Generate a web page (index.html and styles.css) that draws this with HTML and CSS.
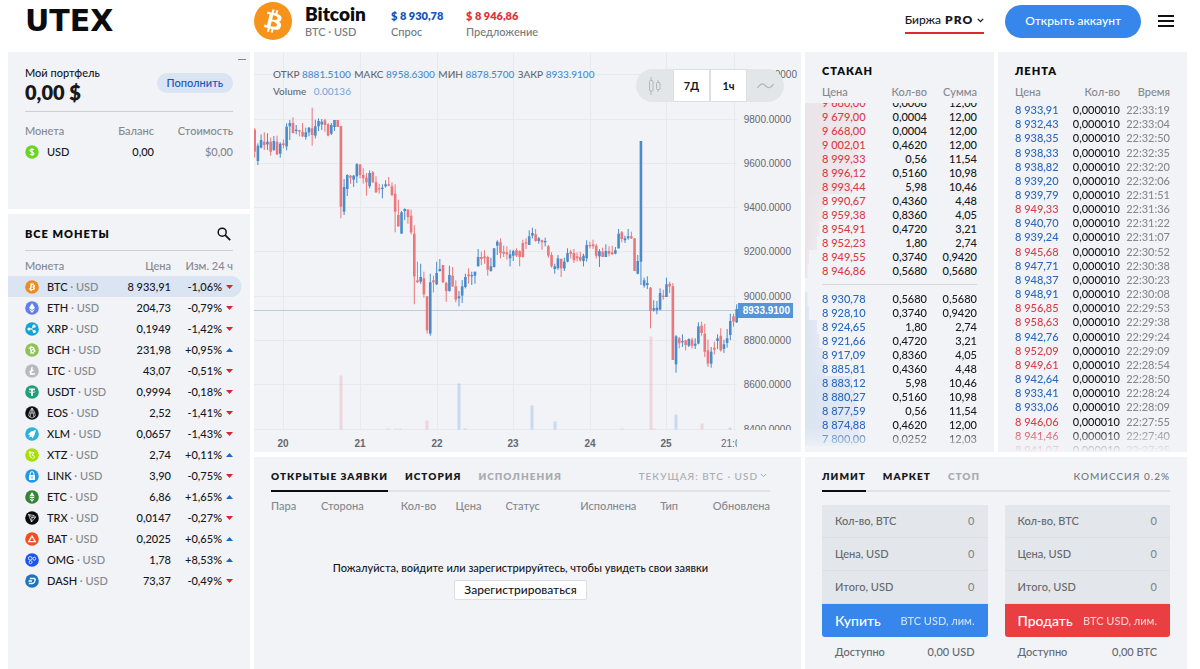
FILE: index.html
```html
<!DOCTYPE html>
<html lang="ru">
<head>
<meta charset="utf-8">
<title>UTEX</title>
<meta name="viewport" content="width=device-width, initial-scale=1">
<link rel="stylesheet" href="styles.css">
</head>
<body>
<header class="top">
  <a class="logo" href="#">UTEX</a>
  <div class="ticker">
    <svg class="ticker-icon" viewBox="0 0 32 32" aria-hidden="true"><circle cx="16" cy="16" r="16" fill="#f7931a"/><path class="btc-mark" fill="#fff" d="M23.189 14.02c.314-2.096-1.283-3.223-3.465-3.975l.708-2.84-1.728-.43-.69 2.765c-.454-.114-.92-.22-1.385-.326l.695-2.783L15.596 6l-.708 2.839c-.376-.086-.746-.17-1.104-.26l.002-.009-2.384-.595-.46 1.846s1.283.294 1.256.312c.7.175.826.638.805 1.006l-.806 3.235c.048.012.11.03.18.057l-.183-.045-1.13 4.532c-.086.212-.303.531-.793.41.018.025-1.256-.313-1.256-.313l-.858 1.978 2.25.561c.418.105.828.215 1.231.318l-.715 2.872 1.727.43.708-2.84c.472.127.93.245 1.378.357l-.706 2.828 1.728.43.715-2.866c2.948.558 5.164.333 6.097-2.333.752-2.146-.037-3.385-1.588-4.192 1.13-.26 1.98-1.003 2.207-2.538zm-3.95 5.538c-.533 2.147-4.148.986-5.32.695l.95-3.805c1.172.293 4.929.872 4.37 3.11zm.535-5.569c-.487 1.953-3.495.96-4.47.717l.86-3.45c.975.243 4.118.696 3.61 2.733z"/></svg>
    <div class="ticker-name"><h1>Bitcoin</h1><p>BTC · USD</p></div>
    <div class="quote"><strong class="bid">$ 8 930,78</strong><p>Спрос</p></div>
    <div class="quote"><strong class="ask">$ 8 946,86</strong><p>Предложение</p></div>
  </div>
  <nav class="actions">
    <button class="mode" type="button">Биржа <b>PRO</b><svg width="7" height="5" viewBox="0 0 7 5" aria-hidden="true"><path d="M.8.9 3.5 3.6 6.2.9" fill="none" stroke="#111" stroke-width="1.2"/></svg></button>
    <button class="signup" type="button">Открыть аккаунт</button>
    <button class="menu" type="button" aria-label="Меню"><svg width="16" height="12" viewBox="0 0 16 12"><path d="M0 1h16M0 6h16M0 11h16" stroke="#111" stroke-width="2"/></svg></button>
  </nav>
</header>

<main class="board">
  <div class="col">
    <section class="panel wallet">
      <button class="collapse" type="button" aria-label="Свернуть"></button>
      <div class="wallet-head">
        <div><h2>Мой портфель</h2><p class="total">0,00 $</p></div>
        <button class="deposit" type="button">Пополнить</button>
      </div>
      <table class="list wallet-list">
        <thead><tr><th>Монета</th><th>Баланс</th><th>Стоимость</th></tr></thead>
        <tbody><tr><td><span class="coin"><svg width="14" height="14" viewBox="0 0 14 14" aria-hidden="true"><circle cx="7" cy="7" r="6.7" fill="#6bd425"/><path d="M9 4.9C8.5 4.2 5 3.9 5 5.5S9 7 9 8.600 5.300 9.900 4.900 8.900M7 3v8" fill="none" stroke="#fff" stroke-width="1.1"/></svg>USD</span></td><td>0,00</td><td class="muted">$0,00</td></tr></tbody>
      </table>
    </section>
    <section class="panel coins">
      <div class="coins-head"><h2 class="caps">ВСЕ МОНЕТЫ</h2>
        <button class="search" type="button" aria-label="Поиск"><svg width="14" height="14" viewBox="0 0 14 14"><circle cx="5.200" cy="5.200" r="4" fill="none" stroke="#111" stroke-width="1.500"/><path d="m8.200 8.200 5 5" stroke="#111" stroke-width="1.800"/></svg></button>
      </div>
      <table class="list coins-list">
        <thead><tr><th>Монета</th><th>Цена</th><th>Изм. 24 ч</th></tr></thead>
        <tbody id="coins"></tbody>
      </table>
    </section>
  </div>

  <div class="col">
    <section class="panel chart">
      <svg id="chart" viewBox="0 0 547 400" preserveAspectRatio="xMinYMin slice" role="img" aria-label="BTC USD"></svg>
      <div class="legend">
        <p>ОТКР <b>8881.5100</b> МАКС <b>8958.6300</b> МИН <b>8878.5700</b> ЗАКР <b>8933.9100</b></p>
        <p>Volume <span>0.00136</span></p>
      </div>
      <div class="range">
        <button type="button" aria-label="Свечи"><svg width="13" height="18" viewBox="0 0 13 18"><path d="M3 0v3.500M3 14v4M10 3v2.500M10 12v3" stroke="#b2b5b8"/><rect x="1.500" y="3.500" width="3.500" height="10.500" rx="1" fill="none" stroke="#b2b5b8"/><rect x="8.500" y="5.500" width="3.500" height="7" rx="1" fill="none" stroke="#b2b5b8"/></svg></button>
        <button class="on" type="button">7Д</button>
        <button class="on" type="button">1ч</button>
        <button type="button" aria-label="Линия"><svg width="17" height="8" viewBox="0 0 17 8"><path d="M.5 6C3 2 5.500.5 8.200 3.500S13.500 7 16.500 1.800" fill="none" stroke="#b2b5b8" stroke-width="1.200"/></svg></button>
      </div>
    </section>
    <section class="panel orders">
      <div class="tabs">
        <button class="tab current" type="button">ОТКРЫТЫЕ ЗАЯВКИ</button><button class="tab" type="button">ИСТОРИЯ</button><button class="tab off" type="button">ИСПОЛНЕНИЯ</button>
        <button class="filter" type="button">ТЕКУЩАЯ: BTC · USD <svg width="7" height="5" viewBox="0 0 7 5" aria-hidden="true"><path d="M.8.9 3.500 3.600 6.200.9" fill="none" stroke="#a9acaf"/></svg></button>
      </div>
      <table class="orders-list"><thead><tr><th>Пара</th><th>Сторона</th><th>Кол-во</th><th>Цена</th><th>Статус</th><th>Исполнена</th><th>Тип</th><th>Обновлена</th></tr></thead></table>
      <div class="empty"><p>Пожалуйста, войдите или зарегистрируйтесь, чтобы увидеть свои заявки</p><button type="button">Зарегистрироваться</button></div>
    </section>
  </div>

  <div class="col">
    <div class="pair">
      <section class="panel feed">
        <h2 class="caps">СТАКАН</h2>
        <table class="ticks heads"><thead><tr><th>Цена</th><th>Кол-во</th><th>Сумма</th></tr></thead></table>
        <div class="asks"><table class="ticks"><tbody id="asks"></tbody></table></div>
        <div class="bids"><table class="ticks"><tbody id="bids"></tbody></table></div>
      </section>
      <section class="panel feed">
        <h2 class="caps">ЛЕНТА</h2>
        <table class="ticks heads"><thead><tr><th>Цена</th><th>Кол-во</th><th>Время</th></tr></thead></table>
        <div class="tape"><table class="ticks"><tbody id="tape"></tbody></table></div>
      </section>
    </div>
    <section class="panel trade">
      <div class="tabs">
        <button class="tab current" type="button">ЛИМИТ</button><button class="tab" type="button">МАРКЕТ</button><button class="tab off" type="button">СТОП</button>
        <span class="fee">КОМИССИЯ 0.2%</span>
      </div>
      <div class="forms">
        <form>
          <label class="field">Кол-во, BTC<input type="text" value="0"></label>
          <label class="field">Цена, USD<input type="text" value="0"></label>
          <label class="field">Итого, USD<input type="text" value="0"></label>
          <button class="submit buy" type="button">Купить <small>BTC USD, лим.</small></button>
          <p class="available"><span>Доступно</span><span>0,00 USD</span></p>
        </form>
        <form>
          <label class="field">Кол-во, BTC<input type="text" value="0"></label>
          <label class="field">Цена, USD<input type="text" value="0"></label>
          <label class="field">Итого, USD<input type="text" value="0"></label>
          <button class="submit sell" type="button">Продать <small>BTC USD, лим.</small></button>
          <p class="available"><span>Доступно</span><span>0,00 BTC</span></p>
        </form>
      </div>
    </section>
  </div>
</main>
<script src="app.js"></script>
</body>
</html>
```
FILE: styles.css
```css
* { box-sizing: border-box; }
body, h1, h2, p { margin: 0; }
body {
  min-height: 100vh;
  display: flex;
  flex-direction: column;
  font: 11px/14px Lato, "Noto Sans", sans-serif;
  font-weight: 500;
  color: #16181c;
  background: #fff;
}
button, input { font: inherit; color: inherit; border: 0; padding: 0; background: none; }
button { cursor: pointer; }
svg { display: block; flex: none; }
table { border-collapse: collapse; width: 100%; }
th, td { padding: 0; font-weight: inherit; text-align: right; vertical-align: middle; white-space: nowrap; }
th:first-child, td:first-child { text-align: left; }
th, .muted { color: #85888d; }

.top { display: flex; align-items: center; height: 52px; padding: 0 26px 10px 25px; }
.logo { width: 229px; font: bold 30px/30px "DejaVu Sans", sans-serif; color: #0b0c0e; text-decoration: none; }
.ticker { display: flex; align-items: center; flex: 1; }
.ticker-icon { width: 38px; height: 38px; margin-right: 13px; }
.ticker-name { width: 86px; }
.ticker h1 { font-size: 19px; line-height: 22px; font-weight: 800; color: #0b0c0e; }
.ticker p { line-height: 14px; color: #76797e; }
.quote { width: 75px; padding-top: 4px; white-space: nowrap; }
.quote strong { display: block; line-height: 18px; font-weight: 800; }
.bid { color: #1455b8; }
.ask { color: #dc3340; }
.actions { display: flex; align-items: center; }
.mode { display: flex; align-items: center; gap: 4px; height: 25px; margin-right: 21px; font-size: 12px; border-bottom: 2px solid #df2730; }
.mode b { font-weight: 800; letter-spacing: 1px; }
.signup { height: 33px; padding: 0 20px; border-radius: 17px; background: #3686eb; color: #fff; font-size: 12px; }
.menu { margin-left: 17px; }

.board { flex: 1; display: grid; grid-template-columns: 242px minmax(0, 1fr) 382px; gap: 4px; padding: 0 13px 0 8px; }
.col { display: flex; flex-direction: column; gap: 5px; min-width: 0; }
.panel { position: relative; background: #f1f3f7; }
.caps { font-size: 11px; line-height: 14px; font-weight: 800; letter-spacing: 1px; color: #0b0c0e; }

.wallet { min-height: 157px; padding: 13px 17px; }
.collapse { position: absolute; top: 7px; right: 4px; width: 8px; height: 1px; background: #85888d; }
.wallet-head, .coins-head { display: flex; align-items: center; justify-content: space-between; border-bottom: 1px solid #cdd1d7; }
.wallet-head { height: 47px; padding-bottom: 7px; }
.wallet-head h2 { font-size: 11px; font-weight: 500; }
.total { font-size: 20px; line-height: 24px; font-weight: 800; }
.deposit { height: 20px; padding: 0 10px; margin-bottom: 4px; border-radius: 10px; background: #dae4f3; color: #1455b8; }
.list th, .list td { height: 21px; }
.list th:first-child { padding-left: 17px; }
.wallet-list { margin-top: 8px; }
.wallet-list th:first-child { padding-left: 0; }
.wallet-list th:last-child { width: 79px; }
.coin { display: flex; align-items: center; gap: 8px; }
.coin i { font-style: normal; color: #85888d; }
.coins { flex: 1; }
.coins-head { margin: 0 17px; height: 37px; padding: 4px 2px 0 0; }
.coins-list { margin-top: 4px; }
.coins-list td:first-child { padding-left: 17px; }
.coins-list th:last-child { padding-right: 17px; width: 79px; }
.coins-list td:last-child { padding-right: 17px; }
.change { display: flex; align-items: center; justify-content: flex-end; gap: 4px; }
.coins-list tr.picked { background: linear-gradient(#dbe4f2, #dbe4f2) 0 0 / calc(100% - 18px) 100% no-repeat; }
.coins-list tr.picked td:last-child { background: radial-gradient(circle at 0 50%, #dbe4f2 10px, transparent 11px) 100% 0 / 19px 100% no-repeat; }

.chart { height: 400px; overflow: hidden; }
.chart > svg { width: 100%; height: 100%; }
.axis { font: 10px "Liberation Sans", Arial, sans-serif; fill: #65686d; }
.axis-strong { font-weight: bold; }
.axis-now { font-weight: bold; fill: #fff; }
.legend { position: absolute; top: 14px; left: 19px; line-height: 17px; font-size: 10px; color: #65686d; }
.legend b { font-weight: 500; color: #4a8dcf; margin-right: 1px; }
.legend span { color: #7aa9dc; margin-left: 5px; }
.range { position: absolute; top: 17px; right: 17px; display: grid; grid-template-columns: repeat(4, 37px); height: 33px; border-radius: 17px; overflow: hidden; background: #e3e6e9; }
.range button { display: grid; place-items: center; }
.range .on { background: #fff; border: 1px solid #dcdee1; font-weight: 700; }

.tabs { display: flex; gap: 17px; height: 35px; border-bottom: 2px solid #dfe2e6; font-size: 10px; letter-spacing: 1px; }
.tab { height: 35px; padding-top: 4px; font-weight: 800; letter-spacing: 1px; border-bottom: 2px solid transparent; white-space: nowrap; }
.tab.current { border-color: #0b0c0e; }
.tab.off { color: #a9acaf; }
.filter { display: flex; align-items: center; gap: 2px; margin-left: auto; padding: 4px 3px 0 0; letter-spacing: 1px; color: #a9acaf; }
.fee { margin-left: auto; padding-top: 12px; color: #76797e; }

.orders { flex: 1; padding: 0 31px 0 17px; }
.orders-list { table-layout: fixed; margin-top: 7px; }
.orders-list th { text-align: left; height: 14px; width: 10%; }
.orders-list th:nth-child(2) { width: 16%; }
.orders-list th:nth-child(3) { width: 11%; }
.orders-list th:nth-child(5) { width: 15%; }
.orders-list th:nth-child(6) { width: 16%; }
.orders-list th:nth-child(7) { width: 8%; }
.orders-list th:last-child { width: 14%; text-align: right; }
.empty { margin-top: 48px; text-align: center; }
.empty button { height: 20px; margin-top: 5px; padding: 0 9px; background: #fff; border: 1px solid #dcdee1; border-radius: 2px; font-size: 12px; line-height: 16px; }

.pair { display: grid; grid-template-columns: 1fr 1fr; gap: 4px; height: 400px; }
.feed { display: flex; flex-direction: column; overflow: hidden; padding-top: 12px; }
.feed .caps { padding: 0 17px; }
.ticks { flex: none; }
.ticks th, .ticks td { height: 14px; line-height: 14px; }
.ticks th:first-child, .ticks td:first-child { padding-left: 17px; }
.ticks th:last-child, .ticks td:last-child { padding-right: 17px; width: 67px; }
.heads { margin-top: 7px; }
.asks { display: flex; flex-direction: column; justify-content: flex-end; overflow: hidden; height: 175px; margin-top: 4px; }
.bids { flex: 1; overflow: hidden; padding-top: 8px; margin-top: 6px; position: relative; }
.bids::before { content: ""; position: absolute; top: 0; left: 17px; right: 17px; height: 1px; background: #d5d9de; }
.bids, .tape { -webkit-mask-image: linear-gradient(#000 calc(100% - 24px), transparent); mask-image: linear-gradient(#000 calc(100% - 24px), transparent); }
.tape { flex: 1; overflow: hidden; margin-top: 4px; }
.tape .ticks { height: 354px; }
#asks tr { background: linear-gradient(90deg, #eae3e8, #efe9ed) 0 0 / var(--depth) 100% no-repeat; }
#bids tr { background: linear-gradient(90deg, #dbe4f2, #e3e9f4) 0 0 / var(--depth) 100% no-repeat; }
.up { color: #2a67bd; }
.down { color: #d93c49; }

.trade { flex: 1; padding: 0 17px; }
.forms { display: grid; grid-template-columns: 1fr 1fr; gap: 17px; margin-top: 13px; }
.field { display: flex; align-items: center; height: 33px; padding: 0 13px; background: #e3e7eb; border-bottom: 1px solid #dce0e5; font-size: 11px; color: #65686d; white-space: nowrap; }
.field input { flex: 1; min-width: 0; width: 20px; text-align: right; color: #85888d; outline: 0; }
.submit { display: flex; align-items: center; justify-content: space-between; width: 100%; height: 33px; padding: 0 13px; border-radius: 0 0 3px 3px; color: #fff; font-size: 14px; }
.submit small { font-size: 11px; opacity: .75; }
.buy { background: #3686eb; }
.sell { background: #e93e42; }
.available { display: flex; justify-content: space-between; padding: 8px 13px; color: #65686d; }
```
FILE: app.js
```js
const stroke = (d, w = 1) => `<path d="${d}" fill="none" stroke="#fff" stroke-width="${w}"/>`;
const solid = (d) => `<path d="${d}" fill="#fff"/>`;
const btc = document.querySelector('.btc-mark').getAttribute('d');

const coins = [
  ['BTC', '8 933,91', '-1,06%', '#f08a1e', `<path d="${btc}" fill="#fff" transform="scale(.4375)"/>`],
  ['ETH', '204,73', '-0,79%', '#627eea', solid('M7 2 10 7 7 9 4 7zM7 12 4 8l3 1.700L10 8z')],
  ['XRP', '0,1949', '-1,42%', '#13a3d8', stroke('M3.500 7h3l2-2.500M6.500 7l2.500 2.500') + '<circle cx="4" cy="7" r="1.600" fill="#fff"/><circle cx="9" cy="4.200" r="1.600" fill="#fff"/><circle cx="9.300" cy="9.600" r="1.600" fill="#fff"/>'],
  ['BCH', '231,98', '+0,95%', '#8dc351', `<path d="${btc}" fill="#fff" transform="rotate(-28 7 7) scale(.4375)"/>`],
  ['LTC', '43,07', '-0,51%', '#b9b9bb', stroke('M7.200 3 5.500 10H10M4.500 8 8.500 6', 1.400)],
  ['USDT', '0,9994', '-0,18%', '#1f9e78', stroke('M4 4.300h6M7 4v7', 1.700) + stroke('M3.500 6.700c1 1 6 1 7 0', 0.700)],
  ['EOS', '2,52', '-1,41%', '#111214', stroke('M7 2 4.500 6 3.700 10 7 12l3.300-2L9.500 6zM7 2 5 11.500M7 2l2 9.500M4.500 7h5', 0.600)],
  ['XLM', '0,0657', '-1,43%', '#28b4dc', solid('M11 3 6 4.500 3 7.500l2 .5-1 2.500L6.500 9.500l1 2L9.500 8z')],
  ['XTZ', '2,74', '+0,11%', '#a6df00', stroke('M5 3v5c0 1.500 1.500 1.500 2 1M3.700 4.800H9L7 7c3 0 3 3.500.5 3.500', 1)],
  ['LINK', '3,90', '-0,75%', '#1e9be8', solid('M4 6h6v5H4z') + stroke('M5.200 6V4.500a1.800 1.800 0 0 1 3.600 0V6', 1) + '<path d="M6.500 7.500h1v2h-1z" fill="#1e9be8"/>'],
  ['ETC', '6,86', '+1,65%', '#328332', solid('M7 2 9.800 6.500 7 5.700 4.200 6.500zM4.200 7.300 7 6.500l2.800.8L7 8.800zM7 12 4.400 8.400 7 9.800l2.600-1.400z')],
  ['TRX', '0,0147', '-0,27%', '#0b0b0d', stroke('M3.500 3.500 9 4.500l1.700 1.700L6.500 11zM3.500 3.500l3.500 3L10.700 6.200M9 4.500 7 6.500 6.500 11', 0.700)],
  ['BAT', '0,2025', '+0,65%', '#f0501e', '<path d="M7 4 10.300 9.600H3.700z" fill="none" stroke="#fff" stroke-width="1.300"/>'],
  ['OMG', '1,78', '+8,53%', '#1a53f0', '<g fill="none" stroke="#fff" stroke-width=".8"><circle cx="5.200" cy="5.300" r="1.800"/><circle cx="9.300" cy="5.700" r="1.500"/><circle cx="5.600" cy="9.200" r="1.500"/></g>'],
  ['DASH', '73,37', '-0,49%', '#1c75bc', stroke('M4.800 4.500H9c1.500 0 1.200 1.500.9 2.700-.4 1.500-1 2.300-2.300 2.300H3.800M3.500 7H7', 1.300)],
];

document.getElementById('coins').innerHTML = coins.map(([name, price, change, color, mark], i) => {
  const up = change[0] === '+';
  const arrow = up ? '<path d="M0 5 3.500 1 7 5z" fill="#1c66c4"/>' : '<path d="M0 1h7L3.500 5z" fill="#d9232e"/>';
  return `<tr${i ? '' : ' class="picked"'}><td><span class="coin"><svg width="14" height="14" viewBox="0 0 14 14" aria-hidden="true"><circle cx="7" cy="7" r="6.800" fill="${color}"/>${mark}</svg><span>${name} <i>· USD</i></span></span></td><td>${price}</td><td><span class="change">${change}<svg width="7" height="6" viewBox="0 0 7 6" aria-hidden="true">${arrow}</svg></span></td></tr>`;
}).join('');

const asks = [
  ['9 680,00', '0,0008', '12,00'], ['9 679,00', '0,0004', '12,00'], ['9 668,00', '0,0004', '12,00'], ['9 002,01', '0,4620', '12,00'],
  ['8 999,33', '0,56', '11,54'], ['8 996,12', '0,5160', '10,98'], ['8 993,44', '5,98', '10,46'], ['8 990,67', '0,4360', '4,48'],
  ['8 959,38', '0,8360', '4,05'], ['8 954,91', '0,4720', '3,21'], ['8 952,23', '1,80', '2,74'], ['8 949,55', '0,3740', '0,9420'],
  ['8 946,86', '0,5680', '0,5680'],
];
const bids = [
  ['8 930,78', '0,5680', '0,5680'], ['8 928,10', '0,3740', '0,9420'], ['8 924,65', '1,80', '2,74'], ['8 921,66', '0,4720', '3,21'],
  ['8 917,09', '0,8360', '4,05'], ['8 885,81', '0,4360', '4,48'], ['8 883,12', '5,98', '10,46'], ['8 880,27', '0,5160', '10,98'],
  ['8 877,59', '0,56', '11,54'], ['8 874,88', '0,4620', '12,00'], ['7 800,00', '0,0252', '12,03'],
];
const depthRow = (tone) => ([price, amount, sum]) => {
  const depth = parseFloat(sum.replace(',', '.')) * 2.4;
  return `<tr style="--depth:${depth.toFixed(1)}%"><td class="${tone}">${price}</td><td>${amount}</td><td>${sum}</td></tr>`;
};
document.getElementById('asks').innerHTML = asks.map(depthRow('down')).join('');
document.getElementById('bids').innerHTML = bids.map(depthRow('up')).join('');

const tape = [
  '+8 933,91 22:33:19', '+8 932,43 22:33:04', '+8 938,35 22:32:50', '+8 938,33 22:32:35', '+8 938,82 22:32:20', '+8 939,20 22:32:06',
  '+8 939,79 22:31:51', '-8 949,33 22:31:36', '+8 940,70 22:31:22', '+8 939,24 22:31:07', '-8 945,68 22:30:52', '+8 947,71 22:30:38',
  '+8 948,37 22:30:23', '+8 948,91 22:30:08', '-8 956,85 22:29:53', '-8 958,63 22:29:38', '+8 942,76 22:29:24', '-8 952,09 22:29:09',
  '-8 949,61 22:28:54', '+8 942,64 22:28:50', '+8 933,41 22:28:24', '+8 933,06 22:28:09', '-8 946,06 22:27:55', '-8 941,46 22:27:40',
  '-8 941,07 22:27:25',
];
document.getElementById('tape').innerHTML = tape.map((t) =>
  `<tr><td class="${t[0] === '+' ? 'up' : 'down'}">${t.slice(1, 9)}</td><td>0,000010</td><td class="muted">${t.slice(10)}</td></tr>`).join('');

/* Candles: direction, wick top, body top, body bottom, wick bottom, in thirds of a pixel. */
const candles = `r100,104,170,188 b145,152,198,210 b118,135,158,160 r112,140,150,165 b115,140,148,165 r128,140,170,182 b123,138,165,168 r122,140,178,180
b142,146,176,188 r133,145,150,160 b85,95,154,166 b75,84,94,135 r67,84,114,116 b90,104,108,118 r104,106,110,124 r84,110,124,126
b98,112,126,134 b96,98,112,124 r38,100,120,152 b74,94,122,130 b70,78,94,108 b72,80,88,105 r72,76,90,110 r84,88,122,124
b84,90,116,120 b75,75,96,108 r75,75,96,96 r93,93,335,370 b252,276,350,360 b238,240,282,303 r240,242,248,266 b240,242,254,276
b204,208,244,264 r207,208,240,250 r220,240,250,266 r234,248,262,302 b226,234,274,280 r228,232,262,264 r244,262,292,294 r266,280,284,296
b268,278,282,310 b256,268,274,278 r246,268,272,274 r262,274,300,304 r268,296,350,412 r314,360,394,396 b348,352,416,416 b340,342,348,375
r342,344,366,386 r344,362,412,418 r390,416,544,628 r500,556,562,564 b506,546,560,566 r530,550,598,608 r604,604,706,716 b536,562,716,722
r542,556,562,592 b500,534,568,570 b492,522,528,530 r510,510,562,564 r560,564,588,620 b512,540,588,590 r516,542,574,576 r556,574,614,622
b588,604,610,634 b555,574,602,624 b536,546,576,580 r520,538,544,566 b530,540,544,570 b530,530,542,566 b462,486,514,514 r470,486,492,510
r466,484,490,506 r482,486,524,542 b488,514,528,530 b460,460,516,518 b436,440,452,480 r430,442,474,490 r452,470,476,486 r454,472,478,494
b464,478,490,514 b464,468,482,498 r460,466,482,486 r466,468,486,514 r434,444,486,488 r430,442,446,462 b406,424,450,450 b398,414,422,430
r402,418,438,440 b426,430,438,446 r434,436,442,464 b428,438,442,454 r450,454,482,488 r472,480,514,518 b506,514,522,536 b480,490,520,524
r490,492,520,546 b488,500,520,528 b460,474,500,502 r464,470,476,490 r462,474,496,504 r472,484,490,500 r470,486,496,500 b476,482,498,514
b436,450,490,500 r440,450,454,460 r434,448,454,462 r446,452,482,490 b462,468,484,516 r458,470,486,486 b448,468,486,486 r454,468,476,484
r452,472,478,480 b456,466,476,478 b402,416,460,460 r408,412,432,442 b422,430,436,444 b402,424,430,434 r410,424,430,432 r430,430,528,528
b480,498,536,538 b138,138,500,570 b548,556,572,578 b544,564,570,582 r576,578,648,700 b616,640,646,650 b618,638,646,658 b580,594,644,644
r584,602,606,614 b548,568,606,606 r560,566,574,594 r564,574,795,795 b720,724,808,833 r726,730,745,760 b718,738,742,756 r734,736,750,766
b730,732,752,756 r728,734,752,760 b730,746,752,762 b682,694,746,748 r680,692,714,722 r686,716,770,786 r734,766,806,816 b756,770,806,818
r740,758,764,778 b718,730,738,762 r700,722,766,770 b734,748,762,774 b702,730,744,758 b656,678,720,735 r656,664,680,695 b628,642,682,684`.split(/\s+/);

/* Volume bars: direction, centre, height. */
const volumes = ['r87,54', 'r173,9', 'b205,46', 'b278,24', 'b301,8', 'r397,93', 'b422,15', 'r448,6', 'r134,1', 'r142,1', 'r146,1', 'b211,1', 'r368,1', 'r400,1', 'b476,2'];

const tone = { r: '#ec777b', b: '#4a8bca' };
const out = [];
const gridX = [29, 106, 183, 259, 336, 412, 480];
const base = 377;
out.push(`<path d="${gridX.map((x) => `M${x}.500 0V${base}`).join('')}" stroke="#e6eaed"/>`);
for (let k = -1; k < 8; k++) {
  const y = Math.round(66.500 + k * 44.300);
  const label = (9800 - k * 200) + '.0000';
  out.push(`<path d="M0 ${y}.500H483" stroke="#e6eaed"/>`);
  out.push(`<text class="axis" x="${k < 0 ? 543 : 537}" y="${y + 4}" text-anchor="end"${k === 7 ? ' clip-path="url(#plot)"' : ''}>${label}</text>`);
}
out.push(`<defs><clipPath id="plot"><path d="M0 0H547V378H0z"/></clipPath><clipPath id="dates"><path d="M0 378H483V400H0z"/></clipPath></defs>`);
volumes.forEach((v) => {
  const [x, h] = v.slice(1).split(',').map(Number);
  out.push(`<rect x="${x - 1.500}" y="${base + 0.500 - h}" width="3" height="${h}" fill="${tone[v[0]]}" opacity=".24"/>`);
});
out.push('<path d="M0 258.500H483" stroke="#bccbe0"/>');
candles.forEach((c, i) => {
  const [high, top, bottom, low] = c.slice(1).split(',').map((n) => n / 3 + 43);
  const x = 0.700 + i * 3.192;
  out.push(`<g fill="${tone[c[0]]}"><rect x="${(x - 0.500).toFixed(2)}" y="${high.toFixed(1)}" width="1" height="${(low - high).toFixed(1)}"/><rect x="${(x - 1.300).toFixed(2)}" y="${top.toFixed(1)}" width="2.600" height="${Math.max(1, bottom - top).toFixed(1)}"/></g>`);
});
[20, 21, 22, 23, 24, 25].forEach((d, i) => {
  out.push(`<text class="axis axis-strong" x="${gridX[i]}" y="395" text-anchor="middle">${d}</text>`);
});
out.push('<text class="axis" x="467" y="395" clip-path="url(#dates)">21:00</text>');
out.push('<rect x="484" y="251" width="55" height="15" fill="#5594d6"/><text class="axis axis-now" x="536" y="262" text-anchor="end">8933.9100</text>');
document.getElementById('chart').innerHTML = out.join('');
```
